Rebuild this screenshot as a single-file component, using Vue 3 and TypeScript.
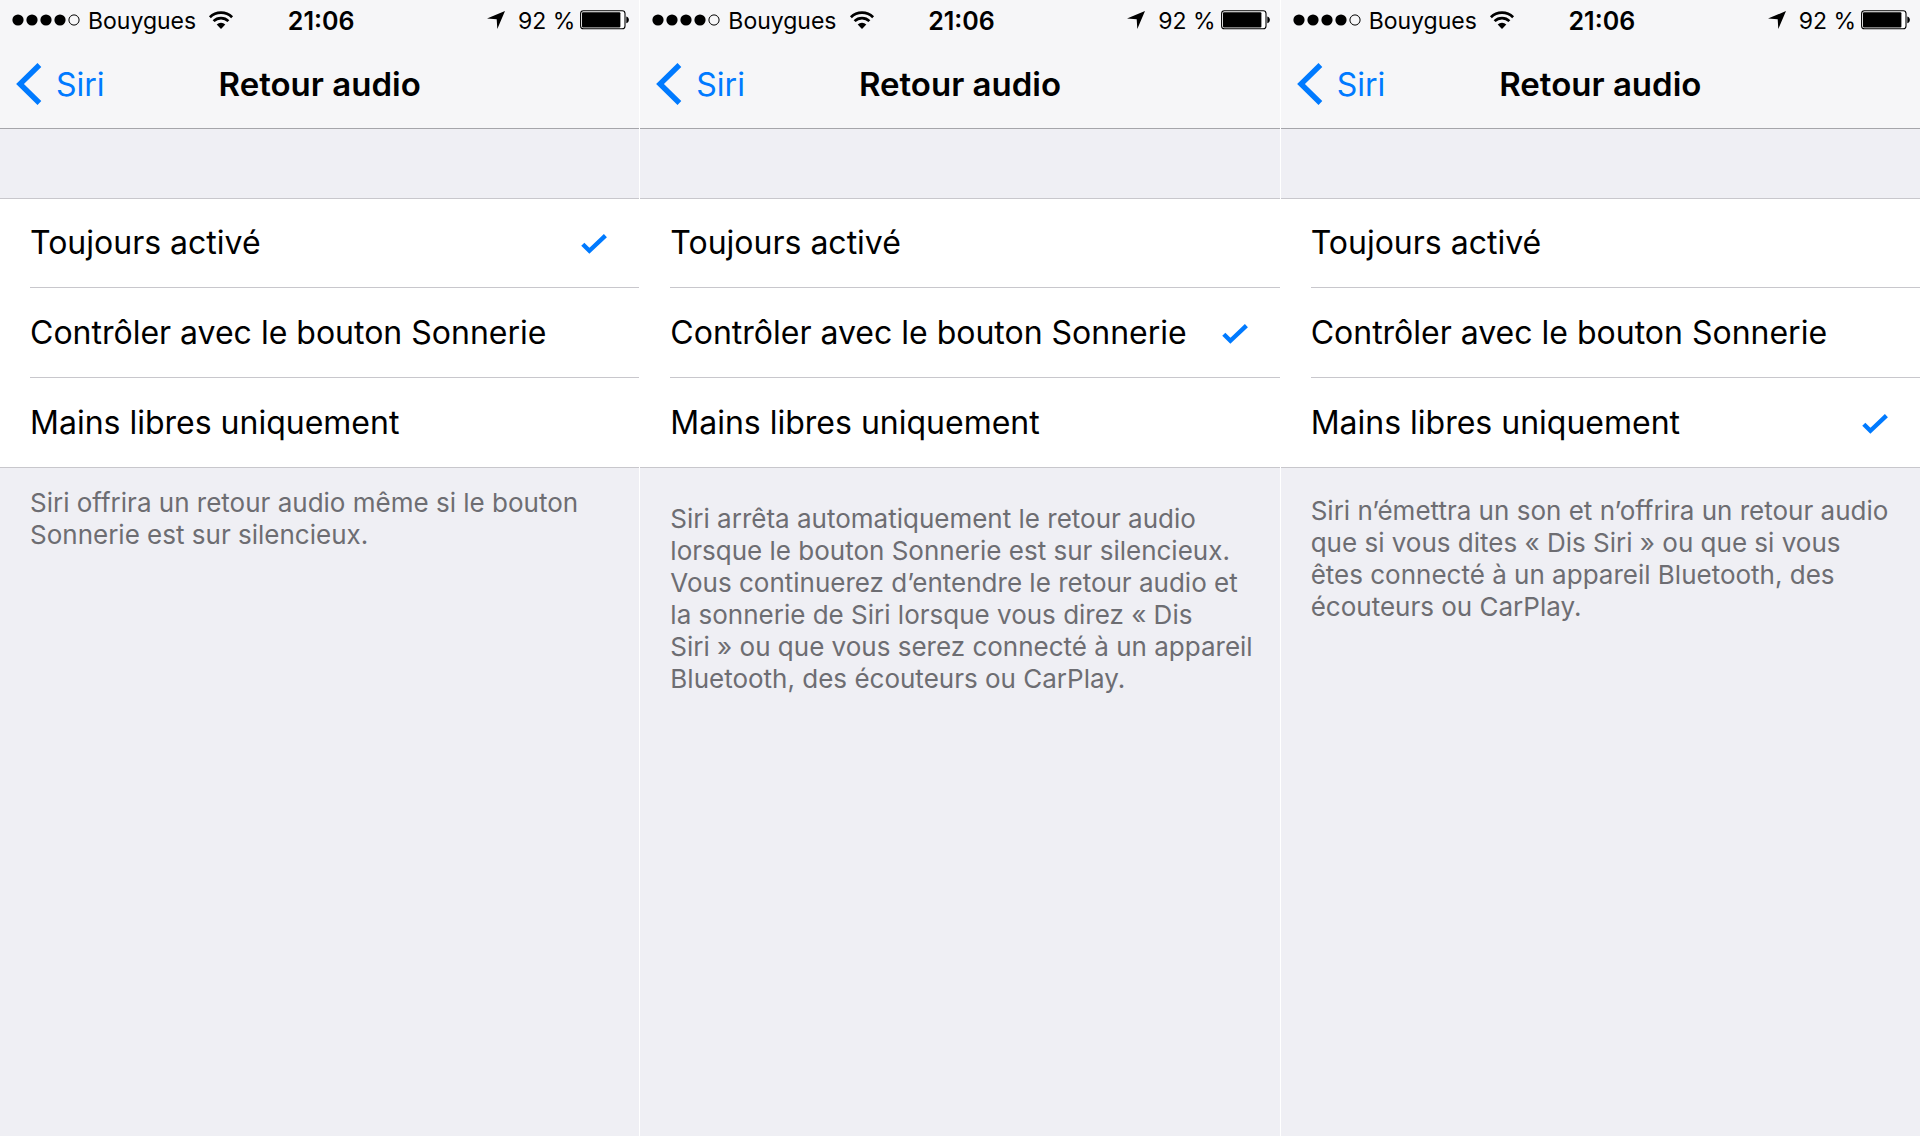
<script setup lang="ts">
import { ref } from 'vue'

interface Screen {
  id: string
  offset: string
  selected: number
  note: string[]
}

const options: string[] = [
  'Toujours activé',
  'Contrôler avec le bouton Sonnerie',
  'Mains libres uniquement',
]

const screens = ref<Screen[]>([
  {
    id: 'always',
    offset: 'near',
    selected: 0,
    note: ['Siri offrira un retour audio même si le bouton', 'Sonnerie est sur silencieux.'],
  },
  {
    id: 'ringer',
    offset: 'far',
    selected: 1,
    note: [
      'Siri arrêta automatiquement le retour audio',
      'lorsque le bouton Sonnerie est sur silencieux.',
      'Vous continuerez d’entendre le retour audio et',
      'la sonnerie de Siri lorsque vous direz « Dis',
      'Siri » ou que vous serez connecté à un appareil',
      'Bluetooth, des écouteurs ou CarPlay.',
    ],
  },
  {
    id: 'handsfree',
    offset: 'middle',
    selected: 2,
    note: [
      'Siri n’émettra un son et n’offrira un retour audio',
      'que si vous dites « Dis Siri » ou que si vous',
      'êtes connecté à un appareil Bluetooth, des',
      'écouteurs ou CarPlay.',
    ],
  },
])
</script>

<template>
  <main class="gallery">
    <section v-for="screen in screens" :key="screen.id" class="screen">
      <header class="top">
        <div class="status">
          <div class="carrier">
            <svg class="signal" width="68" height="12" viewBox="0 0 68 12" aria-hidden="true">
              <circle cx="6" cy="6" r="5.6" />
              <circle cx="20" cy="6" r="5.6" />
              <circle cx="34" cy="6" r="5.6" />
              <circle cx="48" cy="6" r="5.6" />
              <circle cx="62" cy="6" r="5.1" fill="none" stroke="#000" />
            </svg>
            <span>Bouygues</span>
            <svg class="wifi" width="26" height="18" viewBox="0 0 26 18" aria-hidden="true">
              <g fill="none" stroke="#000" stroke-width="2.7">
                <path d="M1.9 6.3a15.7 15.7 0 0 1 22.2 0" />
                <path d="M5.6 10.1a10.5 10.5 0 0 1 14.8 0" />
              </g>
              <path d="M13 18l-4.3-4.4a6.1 6.1 0 0 1 8.6 0z" />
            </svg>
          </div>
          <span class="clock">21:06</span>
          <div class="power">
            <svg class="arrow" width="18" height="18" viewBox="0 0 18 18" aria-hidden="true">
              <path d="M18 0L10.3 18L9.7 8.3L0 7.6z" />
            </svg>
            <span>92 %</span>
            <svg class="battery" width="50" height="20" viewBox="0 0 50 20" aria-hidden="true">
              <rect x="0.6" y="0.8" width="44.4" height="18" rx="2.8" fill="#fff" stroke="#000" stroke-width="1.1" />
              <rect x="2" y="2.2" width="38.4" height="15.2" rx="1" />
              <path d="M46.3 6.6c3.4 0.4 3.4 6.2 0 6.6z" />
            </svg>
          </div>
        </div>
        <nav class="bar">
          <a class="back" href="#siri">
            <svg width="26" height="42" viewBox="0 0 26 42" aria-hidden="true">
              <path d="M23.4 2L4 21l19.4 19" fill="none" stroke="#007aff" stroke-width="5.4" />
            </svg>
            <span>Siri</span>
          </a>
          <h1>Retour audio</h1>
        </nav>
      </header>
      <div class="options" role="radiogroup" aria-label="Retour audio">
        <label v-for="(option, index) in options" :key="option" class="option">
          <span>{{ option }}</span>
          <input v-model="screen.selected" type="radio" :name="screen.id" :value="index" />
          <svg v-if="screen.selected === index" width="26" height="20" viewBox="0 0 26 20" aria-hidden="true">
            <path d="M1.8 10.2L8.4 16.8L24.4 1.7" fill="none" stroke="#007aff" stroke-width="4.4" />
          </svg>
        </label>
      </div>
      <p class="note" :class="screen.offset">
        <template v-for="line in screen.note" :key="line">{{ line }}<br /></template>
      </p>
    </section>
  </main>
</template>

<style>
body {
  margin: 0;
  background: #efeff4;
}
</style>

<style scoped>
.gallery {
  display: grid;
  grid-template-columns: repeat(3, minmax(0, 1fr));
  gap: 1px;
  min-height: 100vh;
  background: #fff;
  color: #000;
  font-family: Inter, "Liberation Sans", sans-serif;
}
.screen {
  background: #efeff4;
}
.top {
  background: #f6f6f8;
  border-bottom: 1px solid #a5a5aa;
}
.status {
  display: grid;
  grid-template-columns: 1fr auto 1fr;
  align-items: center;
  height: 40px;
  padding: 0 9px 0 12px;
  font-size: 23px;
  line-height: 28px;
}
.status span,
.back span {
  padding-top: 2px;
}
.carrier,
.power {
  display: flex;
  align-items: center;
}
.carrier {
  gap: 8px;
}
.wifi {
  margin-left: 4px;
}
.power {
  justify-content: flex-end;
}
.arrow {
  margin-right: 13px;
}
.battery {
  margin-left: 5px;
}
.clock {
  font-size: 25px;
  font-weight: 600;
}
.bar {
  display: grid;
  grid-template-columns: 1fr auto 1fr;
  align-items: center;
  height: 88px;
  padding: 0 16px;
}
.back {
  display: flex;
  align-items: center;
  gap: 14px;
  color: #007aff;
  font-size: 32px;
  line-height: 40px;
  text-decoration: none;
}
h1 {
  margin: 0;
  font-size: 33px;
  line-height: 40px;
  font-weight: 600;
}
.options {
  margin-top: 69px;
  padding-left: 30px;
  background: #fff;
  border-top: 1px solid #c8c7cc;
  border-bottom: 1px solid #c8c7cc;
}
.option {
  display: flex;
  align-items: center;
  justify-content: space-between;
  height: 88px;
  padding-right: 32px;
  font-size: 32px;
  line-height: 40px;
  white-space: nowrap;
}
.option + .option {
  height: 89px;
  border-top: 1px solid #c8c7cc;
}
.option input {
  position: absolute;
  opacity: 0;
}
.option svg {
  margin-top: 2px;
}
.note {
  margin: 0;
  padding: 0 30px;
  color: #6d6d72;
  font-size: 26px;
  line-height: 32px;
  white-space: nowrap;
}
.near {
  padding-top: 19px;
}
.middle {
  padding-top: 27px;
}
.far {
  padding-top: 35px;
}
</style>
